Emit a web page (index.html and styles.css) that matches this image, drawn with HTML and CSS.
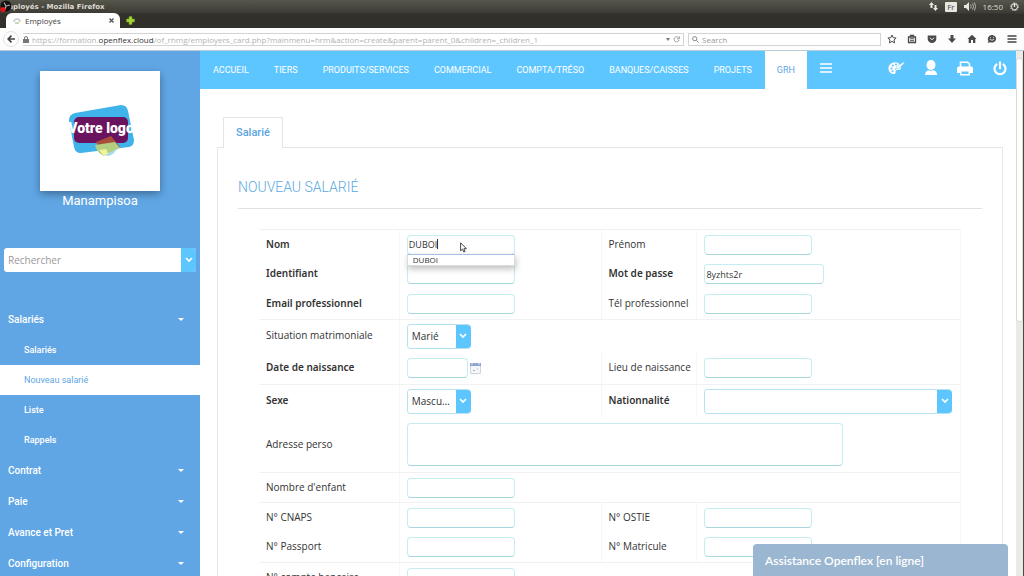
FILE: index.html
```html
<!DOCTYPE html>
<html lang="fr">
<head>
<meta charset="utf-8">
<title>Employés</title>
<link rel="stylesheet" href="styles.css">
</head>
<body>
<header class="window">
  <div class="titlebar">
    <svg class="recorder" viewBox="0 0 12 12"><circle cx="6" cy="6" r="5.500" fill="#111"/><path d="M6 6 4 2.500M6 6l4-1M6 6l-1 3.500" stroke="#aaa" stroke-width="1.200"/><circle cx="3" cy="9.500" r="2.500" fill="#f01010"/></svg>
    <span class="window-title">Employés - Mozilla Firefox</span>
    <div class="tray">
      <svg width="9" height="9" viewBox="0 0 9 9" fill="#e8e6df"><path d="M2.500 0 5 3H3.500v3h-2V3H0zM6.500 9 9 6H7.500V3h-2v3H4z"/></svg>
      <span class="lang">Fr</span>
      <svg width="12" height="9" viewBox="0 0 12 9"><path d="M0 3h2l3-3v9L2 6H0z" fill="#e8e6df"/><path d="M6.500 2.500q1.500 2 0 4M8.500 1.500q2 3 0 6M10.500.5q2 4 0 8" fill="none" stroke="#b5b3ac"/></svg>
      <span>16:50</span>
      <svg width="9" height="9" viewBox="0 0 9 9" fill="none" stroke="#e8e6df"><circle cx="4.500" cy="4.800" r="3"/><circle cx="4.500" cy="4.800" r="3.900" stroke-dasharray="1.200 1.200"/><path d="M4.500 1v4" stroke-width="1.300"/></svg>
    </div>
  </div>
  <div class="tabs">
    <div class="tab">
      <svg width="8" height="8" viewBox="0 0 8 8"><path d="M1 5q0-3 3-3t3 3" fill="none" stroke="#c4cdd2" stroke-width="1.500"/><path d="M2 6h4" stroke="#b8cf9a" stroke-width="1.500"/></svg>
      <span class="tab-label">Employés</span>
      <button class="plain" aria-label="Fermer"><svg width="5" height="5" viewBox="0 0 5 5"><path d="m.5.5 4 4m0-4-4 4" stroke="#555" stroke-width="1.400"/></svg></button>
    </div>
    <button class="plain" aria-label="Nouvel onglet"><svg width="9" height="9" viewBox="0 0 9 9"><path d="M3 .5h3V3h2.500v3H6v2.500H3V6H.5V3H3z" fill="#a6d53a" stroke="#6c9a18" stroke-width=".5"/></svg></button>
  </div>
  <div class="toolbar">
    <button class="plain back" aria-label="Retour"><svg width="8" height="8" viewBox="0 0 8 8"><path d="M8 4H1.500M4.500.7 1.200 4l3.300 3.300" fill="none" stroke="#444" stroke-width="1.700"/></svg></button>
    <div class="address">
      <svg width="6" height="7" viewBox="0 0 6 7"><path d="M1.500 3V2a1.500 1.500 0 0 1 3 0v1" fill="none" stroke="#777"/><path d="M0 3h6v4H0z" fill="#777"/></svg>
      <span class="url">https://formation.<b>openflex.cloud</b>/of_rhmg/employers_card.php?mainmenu=hrm&amp;action=create&amp;parent=parent_0&amp;children=_children_1</span>
      <svg width="4" height="3" viewBox="0 0 4 3"><path d="M0 0h4L2 3z" fill="#777"/></svg>
      <svg width="7" height="7" viewBox="0 0 7 7"><path d="M5.500 1.700A2.500 2.500 0 1 0 6 4M6.300.3v2.500H4" fill="none" stroke="#999"/></svg>
    </div>
    <div class="websearch">
      <svg width="7" height="7" viewBox="0 0 7 7" fill="none" stroke="#888"><circle cx="2.700" cy="2.700" r="2.100"/><path d="m4.300 4.300 2.300 2.300"/></svg>
      <input class="websearch-input" type="search" placeholder="Search" aria-label="Search">
    </div>
    <div class="tools">
      <svg viewBox="0 0 10 10"><path d="m5 1 1.200 2.700 2.900.3L7 6l.6 2.900L5 7.400 2.400 8.900 3 6 .9 4l2.900-.3z" fill="none" stroke="#4a4a4a"/></svg>
      <svg viewBox="0 0 10 10"><path d="M1.500 3h7v5.500h-7zM3.500 3V1.300h3V3" fill="none" stroke="#4a4a4a" stroke-width="1.300"/><path d="M3 4.800h4M3 6.700h4" stroke="#4a4a4a"/></svg>
      <svg viewBox="0 0 10 10"><path d="M.7 1.500h8.600V5a4.300 4 0 0 1-8.600 0z" fill="#4a4a4a"/><path d="m3 3.800 2 2 2-2" fill="none" stroke="#fff"/></svg>
      <svg viewBox="0 0 10 10"><path d="M3.500 1h3v3.500H9L5 9 1 4.500h2.500z" fill="#4a4a4a"/></svg>
      <svg viewBox="0 0 10 10"><path d="M5 .8 9.500 5H8.300v4H6V6H4v3H1.700V5H.5z" fill="#4a4a4a"/></svg>
      <svg viewBox="0 0 10 10"><path d="M5 1a4.200 3.800 0 1 1-2 7.200L.8 9l.6-2A4 4 0 0 1 5 1z" fill="#4a4a4a"/><path d="M2.800 5.300q2.200 2 4.400 0M3 3.700h1M6 3.700h1" fill="none" stroke="#fff" stroke-width=".8"/></svg>
      <svg viewBox="0 0 10 10"><path d="M.5 2h9M.5 5h9M.5 8h9" stroke="#444" stroke-width="1.500"/></svg>
    </div>
  </div>
</header>

<div class="viewport">
  <aside class="sidebar">
    <svg class="logo" viewBox="0 0 120 120" role="img" aria-label="Votre logo">
      <path d="M35 42 81 34q6 0 7 6l6 29q0 6-5 7l-48 6q-6 0-7-6l-5-26q0-7 6-8z" fill="#40b4ea"/>
      <rect x="34" y="46" width="54" height="26" rx="5" fill="#6a1460"/>
      <path d="m56 71 15-6 9 11-16 8z" fill="#a94d38"/>
      <path d="m55 74 20-3 5 6-16 8q-7-3-9-11z" fill="#b3cf82"/>
      <path d="m59 79 7-1 3 6-5 1z" fill="#f2f29a"/><path d="m65 84 12-6-4 5-4 2z" fill="#a5dcf0"/>
      <text class="logo-text" x="61" y="62" text-anchor="middle">Votre logo</text>
    </svg>
    <div class="company">Manampisoa</div>
    <form class="sidesearch">
      <input class="sidesearch-input" type="text" placeholder="Rechercher" aria-label="Rechercher">
      <button class="arrow" type="button" aria-label="Options"><svg width="8" height="6" viewBox="0 0 8 6"><path d="m1 1 3 3 3-3" fill="none" stroke="#fff" stroke-width="1.700"/></svg></button>
    </form>
    <nav class="menu">
      <a class="menu-item" href="#">Salariés<i class="caret"></i></a>
      <a class="menu-sub" href="#">Salariés</a>
      <a class="menu-sub current" href="#">Nouveau salarié</a>
      <a class="menu-sub" href="#">Liste</a>
      <a class="menu-sub" href="#">Rappels</a>
      <a class="menu-item" href="#">Contrat<i class="caret"></i></a>
      <a class="menu-item" href="#">Paie<i class="caret"></i></a>
      <a class="menu-item" href="#">Avance et Pret<i class="caret"></i></a>
      <a class="menu-item" href="#">Configuration<i class="caret"></i></a>
    </nav>
  </aside>

  <main class="main">
    <nav class="topnav">
      <a class="nav-link" href="#">ACCUEIL</a>
      <a class="nav-link" href="#">TIERS</a>
      <a class="nav-link" href="#">PRODUITS/SERVICES</a>
      <a class="nav-link" href="#">COMMERCIAL</a>
      <a class="nav-link" href="#">COMPTA/TRÉSO</a>
      <a class="nav-link" href="#">BANQUES/CAISSES</a>
      <a class="nav-link" href="#">PROJETS</a>
      <a class="nav-link active" href="#">GRH</a>
      <button class="plain burger" aria-label="Menu"><svg width="12" height="10" viewBox="0 0 12 10"><path d="M0 1h12M0 5h12M0 9h12" stroke="#fff" stroke-width="1.400"/></svg></button>
      <div class="actions">
        <button class="plain" aria-label="Thème"><svg width="17" height="16" viewBox="0 0 17 16"><path d="M7 2.500C3 2.500.5 5 .5 8.500S3 14 6 14c2 0 1.500-1.500 1.500-2.500 0-1.500 1.500-1.500 3-1.500 1.700 0 2.500-1 2.500-2.500 0-3-2.500-5-6-5z" fill="#fff"/><g fill="#5ec6ff"><circle cx="3.500" cy="8.500" r="1.100"/><circle cx="4.800" cy="5.500" r="1.100"/><circle cx="8" cy="4.500" r="1.100"/><circle cx="4.500" cy="11.300" r="1"/></g><path d="M7 9.500 9.500 6l6-4 1 1-5 5z" fill="#fff" stroke="#5ec6ff" stroke-width=".6"/></svg></button>
        <button class="plain" aria-label="Compte"><svg width="12" height="16" viewBox="0 0 12 16" fill="#fff"><ellipse cx="6" cy="5" rx="4.500" ry="5"/><path d="M0 15q0-4 4-4.800 2 1 4 0 4 .8 4 4.800z"/></svg></button>
        <button class="plain" aria-label="Imprimer"><svg width="16" height="15" viewBox="0 0 16 15"><path d="M3.500 6V1.200h7l2 2V6" fill="none" stroke="#fff" stroke-width="1.600"/><path d="M2 5.500h12q2 0 2 2V12h-3v2.500H3V12H0V7.500q0-2 2-2z" fill="#fff"/><path d="M4.500 10.500h7v2.500h-7z" fill="#5ec6ff"/></svg></button>
        <button class="plain" aria-label="Déconnexion"><svg width="14" height="15" viewBox="0 0 14 15" fill="none" stroke="#fff" stroke-width="2.200" stroke-linecap="round"><path d="M3.500 3.500a5.500 5.500 0 1 0 7 0M7 1.300v6"/></svg></button>
      </div>
    </nav>

    <div class="content">
      <div class="card-tabs"><a class="card-tab" href="#">Salarié</a></div>
      <section class="card">
        <h1 class="heading">NOUVEAU SALARIÉ</h1>
        <form class="fields">
          <div class="row ruled split">
            <label class="required" for="nom">Nom</label>
            <div class="cell combo">
              <input class="text" id="nom" type="text" value="DUBOI">
              <span class="insertion"></span>
              <div class="suggest">DUBOI</div>
              <svg class="pointer" width="7" height="11" viewBox="0 0 7 11"><path d="M.6.8v8l1.900-1.700L3.800 10l1.300-.6L3.900 6.700h2.500z" fill="#fff" stroke="#333" stroke-width=".9"/></svg>
            </div>
            <label for="prenom">Prénom</label>
            <div class="cell"><input class="text" id="prenom" type="text"></div>
          </div>
          <div class="row split">
            <label class="required" for="ident">Identifiant</label>
            <div class="cell"><input class="text" id="ident" type="text"></div>
            <label class="required" for="pass">Mot de passe</label>
            <div class="cell"><input class="text wide" id="pass" type="text" value="8yzhts2r"></div>
          </div>
          <div class="row split">
            <label class="required" for="mail">Email professionnel</label>
            <div class="cell"><input class="text" id="mail" type="text"></div>
            <label for="tel">Tél professionnel</label>
            <div class="cell"><input class="text" id="tel" type="text"></div>
          </div>
          <div class="row ruled tall">
            <label for="situation">Situation matrimoniale</label>
            <div class="cell span"><div class="picker"><select class="select" id="situation"><option>Marié</option></select><span class="arrow"><svg width="8" height="6" viewBox="0 0 8 6"><path d="m1 1 3 3 3-3" fill="none" stroke="#fff" stroke-width="1.700"/></svg></span></div></div>
          </div>
          <div class="row tall split">
            <label class="required" for="naissance">Date de naissance</label>
            <div class="cell">
              <input class="text date" id="naissance" type="text">
              <button class="plain" type="button" aria-label="Calendrier"><svg width="11" height="12" viewBox="0 0 11 12"><path d="M.5 1.500h10v10H.5z" fill="#f4f6fa" stroke="#cfd6e2"/><path d="M0 1h11v3H0z" fill="#8fa5cf"/><path d="M2 1v1.500M9 1v1.500" stroke="#fff"/><path d="M3 8.500h2M7 7h1" stroke="#a9b4c6"/></svg></button>
            </div>
            <label for="lieu">Lieu de naissance</label>
            <div class="cell"><input class="text" id="lieu" type="text"></div>
          </div>
          <div class="row ruled tall split">
            <label class="required" for="sexe">Sexe</label>
            <div class="cell"><div class="picker"><select class="select" id="sexe"><option>Masculin</option></select><span class="arrow"><svg width="8" height="6" viewBox="0 0 8 6"><path d="m1 1 3 3 3-3" fill="none" stroke="#fff" stroke-width="1.700"/></svg></span></div></div>
            <label class="required" for="nation">Nationnalité</label>
            <div class="cell"><div class="picker full"><select class="select" id="nation"><option></option></select><span class="arrow"><svg width="8" height="6" viewBox="0 0 8 6"><path d="m1 1 3 3 3-3" fill="none" stroke="#fff" stroke-width="1.700"/></svg></span></div></div>
          </div>
          <div class="row">
            <label for="adresse">Adresse perso</label>
            <div class="cell span roomy"><textarea class="area" id="adresse"></textarea></div>
          </div>
          <div class="row ruled">
            <label for="enfants">Nombre d'enfant</label>
            <div class="cell span"><input class="text" id="enfants" type="text"></div>
          </div>
          <div class="row ruled split">
            <label for="cnaps">N° CNAPS</label>
            <div class="cell"><input class="text" id="cnaps" type="text"></div>
            <label for="ostie">N° OSTIE</label>
            <div class="cell"><input class="text" id="ostie" type="text"></div>
          </div>
          <div class="row split">
            <label for="passport">N° Passport</label>
            <div class="cell"><input class="text" id="passport" type="text"></div>
            <label for="matricule">N° Matricule</label>
            <div class="cell"><input class="text" id="matricule" type="text"></div>
          </div>
          <div class="row ruled">
            <label for="compte">N° compte bancaire</label>
            <div class="cell span"><input class="text" id="compte" type="text"></div>
          </div>
        </form>
      </section>
    </div>
  </main>
  <div class="scrollbar"><div class="thumb"></div></div>
  <button class="assist" type="button">Assistance Openflex [en ligne]</button>
</div>
</body>
</html>
```

FILE: styles.css
```css
* { box-sizing: border-box; }

body {
  margin: 0;
  height: 100vh;
  display: flex;
  flex-direction: column;
  overflow: hidden;
  background: #fff;
  font-family: Roboto, sans-serif;
  font-size: 10px;
  color: #333;
}

a { text-decoration: none; color: inherit; }
svg { display: block; flex: none; }
input, select, textarea, button { font: inherit; color: inherit; margin: 0; outline: none; }
.plain { background: none; border: 0; padding: 0; display: flex; align-items: center; }

/* Browser window */
.window {
  flex: none;
  font-family: "Open Sans", sans-serif;
  font-size: 8px;
  background: linear-gradient(#57564c 0, #3c3b35 13px, #31302b 14px, #31302b 100%);
}
.titlebar {
  position: relative;
  display: flex;
  align-items: center;
  justify-content: space-between;
  height: 13px;
  padding: 0 5px 0 1px;
  color: #dfdbd2;
}
.recorder { position: absolute; left: 0; top: 0; width: 12px; height: 12px; }
.window-title { font-family: "DejaVu Sans", sans-serif; font-weight: bold; font-size: 7px; }
.tray { display: flex; align-items: center; gap: 7px; }
.lang { background: #e8e6df; color: #444; padding: 0 2px; line-height: 10px; border-radius: 1px; }

.tabs { display: flex; align-items: center; gap: 6px; height: 15px; padding-left: 6px; }
.tab {
  display: flex;
  align-items: center;
  gap: 4px;
  width: 114px;
  height: 15px;
  padding: 0 6px 0 7px;
  border-radius: 6px 6px 0 0;
  background: #fff;
  color: #444;
}
.tab-label { flex: 1; }

.toolbar {
  display: flex;
  align-items: center;
  gap: 4px;
  height: 23px;
  padding: 0 7px 0 3px;
  background: #fdfdfd;
  border-bottom: 1px solid #b9cdd8;
}
.back {
  width: 16px;
  height: 16px;
  justify-content: center;
  border: 1px solid #e4e4e4;
  border-radius: 50%;
}
.address, .websearch {
  display: flex;
  align-items: center;
  gap: 3px;
  height: 13px;
  border: 1px solid #d4d4d4;
  background: #fff;
}
.address { flex: 1; border-left: 0; padding-right: 3px; color: #b3b3b3; }
.url { flex: 1; white-space: nowrap; }
.url b { font-weight: 400; color: #333; }
.websearch { width: 193px; padding-left: 3px; }
.websearch-input { flex: 1; min-width: 0; border: 0; padding: 0; background: none; }
.websearch-input::placeholder { color: #999; opacity: 1; }
.tools { display: flex; justify-content: space-between; width: 132px; padding-left: 2px; }
.tools svg { width: 10px; height: 10px; }

/* Page */
.viewport { flex: 1; min-height: 0; display: flex; position: relative; }

.sidebar {
  flex: none;
  width: 200px;
  padding-top: 20px;
  background: #60a6e5;
  color: #fff;
  overflow: hidden;
}
.logo { width: 120px; height: 120px; margin: 0 auto; background: #fff; box-shadow: 0 3px 8px rgba(0, 0, 0, .35); }
.logo-text { font-size: 14px; font-weight: 900; fill: #fff; }
.company { line-height: 20px; text-align: center; font-size: 13px; }
.sidesearch {
  display: flex;
  height: 24px;
  margin: 37px 4px 32px;
  border-radius: 3px;
  overflow: hidden;
  background: #fff;
}
.sidesearch-input {
  flex: 1;
  min-width: 0;
  border: 0;
  padding: 0 4px;
  background: none;
  font-family: "Open Sans", sans-serif;
}
.sidesearch-input::placeholder { color: #999; opacity: 1; }
.arrow {
  flex: none;
  display: flex;
  align-items: center;
  justify-content: center;
  width: 15px;
  border: 0;
  padding: 0;
  background: #5ec6ff;
}

.menu { display: flex; flex-direction: column; font-weight: 500; }
.menu-item {
  display: flex;
  align-items: center;
  justify-content: space-between;
  height: 31px;
  padding: 0 16px 0 8px;
}
.caret { border: 3px solid transparent; border-top-color: #fff; border-bottom: 0; }
.menu-sub { height: 30px; line-height: 30px; padding-left: 24px; font-size: 9px; }
.current { background: #fff; color: #60a6e5; font-weight: 400; }

.main { flex: 1; min-width: 0; overflow: hidden; }
.topnav {
  display: flex;
  align-items: stretch;
  gap: 1px;
  height: 38px;
  padding-left: 1px;
  background: #5ec6ff;
  color: #fff;
  font-size: 9px;
}
.nav-link { display: flex; align-items: center; padding: 0 12px; }
.active { background: #fff; color: #60a6e5; }
.burger { padding: 0 12px 4px; }
.actions { display: flex; align-items: center; gap: 20px; margin-left: auto; padding: 0 9px 4px 0; }

.content { padding: 28px 13px 0 17px; }
.card-tabs { display: flex; padding-left: 6px; }
.card-tab {
  position: relative;
  z-index: 1;
  padding: 0 12px;
  margin-bottom: -1px;
  line-height: 30px;
  border: 1px solid #e4e4e4;
  border-bottom: 0;
  background: #fff;
  color: #5aa5df;
  font-size: 11px;
  font-weight: 500;
}
.card { border: 1px solid #e6e6e6; padding: 24px 20px 0; }
.heading {
  margin: 0 0 20px;
  padding-bottom: 6px;
  border-bottom: 1px solid #e0e0e0;
  color: #5aa9e2;
  font-size: 14px;
  line-height: 30px;
  font-weight: 300;
}

/* Form */
.fields { margin: 0 21px; font-family: "Open Sans", sans-serif; border-right: 1px solid #f8f8f8; }
.row {
  display: grid;
  grid-template-columns: minmax(0, 140fr) minmax(0, 202fr) minmax(0, 96fr) minmax(0, 264fr);
  min-height: 30px;
}
.ruled { border-top: 1px solid #f1f1f1; }
.tall { min-height: 32px; }
.tall.ruled { min-height: 33px; }
.row > label { display: flex; align-items: center; padding: 0 0 2px 7px; white-space: nowrap; }
.split > label:nth-child(3) { border-left: 1px solid #f6f6f6; }
.required { font-family: "Noto Sans", sans-serif; font-weight: 600; }
.cell { display: flex; align-items: center; gap: 2px; padding: 3px 7px; border-left: 1px solid #f8f8f8; }
.span { grid-column: 2 / 5; }
.roomy { padding: 6px 7px; }
.text {
  width: 108px;
  height: 20px;
  padding: 0 1px;
  border: 1px solid #c5eef2;
  border-bottom-color: #a9d5dc;
  border-radius: 4px;
  background: #fff;
  font-size: 9px;
}
.wide { width: 120px; }
.date { width: 61px; }
.picker {
  display: flex;
  width: 64px;
  height: 25px;
  border: 1px solid #b5e2ee;
  border-right: 0;
  border-radius: 4px;
  overflow: hidden;
}
.full { width: 248px; }
.select {
  flex: 1;
  min-width: 0;
  appearance: none;
  border: 0;
  padding: 0 4px;
  background: #fff;
  text-overflow: ellipsis;
}
.area {
  width: 436px;
  height: 43px;
  border: 1px solid #c5eef2;
  border-bottom-color: #a9d5dc;
  border-radius: 4px;
  resize: none;
}
.combo { position: relative; }
.insertion { position: absolute; left: 37px; top: 9px; width: 1px; height: 10px; background: #333; }
.suggest {
  position: absolute;
  left: 7px;
  top: 24px;
  width: 108px;
  height: 12px;
  padding-left: 5px;
  font-size: 8px;
  line-height: 10px;
  background: #fff;
  border: 1px solid #dcdcdc;
  border-top-color: #a9bfe6;
  box-shadow: 1px 3px 6px rgba(0, 0, 0, .25);
  z-index: 2;
}
.pointer { position: absolute; left: 60px; top: 12px; z-index: 3; }

.scrollbar { flex: none; width: 8px; padding-top: 7px; background: #eceae6; border-right: 1px solid #4a4944; }
.thumb { height: 51%; background: #fff; border: 1px solid #dcdad5; border-radius: 3px; }

.assist {
  position: absolute;
  right: 16px;
  bottom: 0;
  width: 255px;
  height: 32px;
  padding: 0 12px;
  border: 0;
  border-radius: 4px 4px 0 0;
  background: #9bb6d0;
  color: #fff;
  font-family: Lato, sans-serif;
  font-size: 12px;
  font-weight: 600;
  text-align: left;
  z-index: 5;
}
```
